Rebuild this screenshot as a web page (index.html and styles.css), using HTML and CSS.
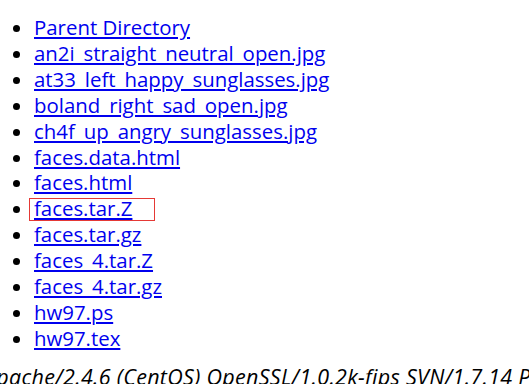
FILE: index.html
```html
<!DOCTYPE html>
<html lang="en">
<head>
  <meta charset="UTF-8" />
  <title>Index of /faces</title>
  <link rel="stylesheet" href="styles.css">
</head>
<body>
  <ul class="listing">
    <li><a href="#">Parent Directory</a></li>
    <li><a href="#">an2i_straight_neutral_open.jpg</a></li>
    <li><a href="#">at33_left_happy_sunglasses.jpg</a></li>
    <li><a href="#">boland_right_sad_open.jpg</a></li>
    <li><a href="#">ch4f_up_angry_sunglasses.jpg</a></li>
    <li><a href="#">faces.data.html</a></li>
    <li><a href="#">faces.html</a></li>
    <li class="marked"><a href="#">faces.tar.Z</a><span class="focus-box"></span></li>
    <li><a href="#">faces.tar.gz</a></li>
    <li><a href="#">faces_4.tar.Z</a></li>
    <li><a href="#">faces_4.tar.gz</a></li>
    <li><a href="#">hw97.ps</a></li>
    <li><a href="#">hw97.tex</a></li>
  </ul>
  <address class="server">Apache/2.4.6 (CentOS) OpenSSL/1.0.2k-fips SVN/1.7.14 PHP/5.4.16 Server at www.cs.cmu.edu Port 80</address>
</body>
</html>
```

FILE: styles.css
```css
html {
  overflow: hidden;
}
body {
  font-family: 'Open Sans', 'Noto Sans', sans-serif;
  font-size: 20.4px;
  line-height: 25.9px;
  margin: 15px 0 0 -6px;
  color: #000;
  background: #fff;
}
.listing {
  margin: 0 0 12px;
  padding-left: 40px;
}
.listing li {
  position: relative;
}
.listing a {
  color: #0000ee;
}
.focus-box {
  position: absolute;
  left: -5px;
  top: 2px;
  width: 124px;
  height: 21px;
  border: 1px solid #e53935;
}
.server {
  white-space: nowrap;
  font-style: italic;
  font-size: 21.5px;
  letter-spacing: 0.3px;
  margin-left: -10px;
}
```
